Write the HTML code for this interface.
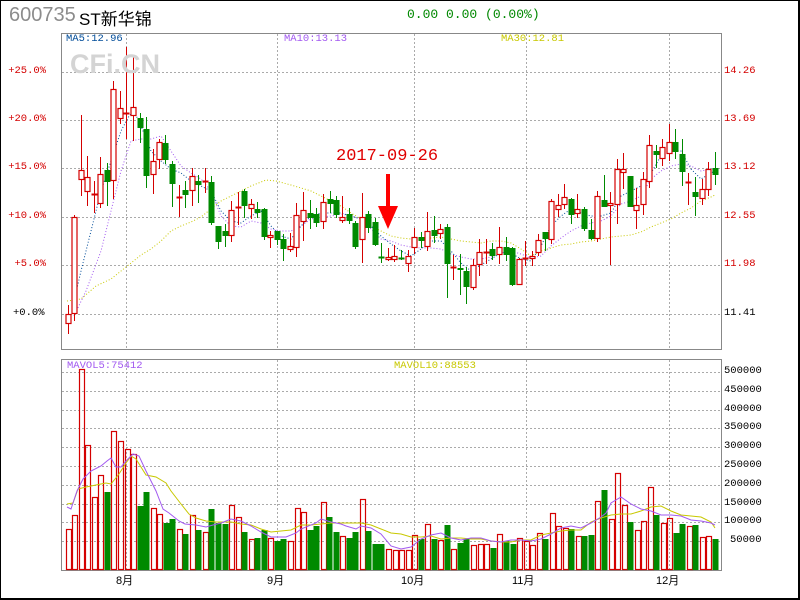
<!DOCTYPE html>
<html><head><meta charset="utf-8">
<style>
html,body{margin:0;padding:0;background:#fff;}
#w{position:relative;width:800px;height:600px;overflow:hidden;box-sizing:border-box;border:1px solid #000;border-right:2px solid #000;border-bottom:2px solid #000;}
.t{position:absolute;white-space:nowrap;font-family:"Liberation Mono",monospace;}
svg{position:absolute;left:0;top:0;}
</style></head><body>
<div id="w">
<svg id="s" width="800" height="600" xmlns="http://www.w3.org/2000/svg"></svg>
<div class="t" style="left:8px;top:3px;font-family:'Liberation Sans',sans-serif;font-size:20px;color:#8c8c8c;">600735</div>
<div class="t" style="left:78px;top:4px;font-family:'Liberation Sans','Noto Sans CJK SC',sans-serif;font-size:17px;color:#000;">ST新华锦</div>
<div class="t" style="left:406px;top:6px;font-size:13px;color:#008800;">0.00 0.00 (0.00%)</div>
<div class="t" style="left:65px;top:32px;font-size:10.5px;color:#004c99;">MA5:12.96</div>
<div class="t" style="left:283px;top:32px;font-size:10.5px;color:#a259f0;">MA10:13.13</div>
<div class="t" style="left:500px;top:32px;font-size:10.5px;color:#c8c800;">MA30:12.81</div>
<div class="t" style="left:69px;top:48px;font-family:'Liberation Sans',sans-serif;font-weight:bold;font-size:27px;color:#d4d4d4;">CFi.CN</div>
<div class="t" style="left:335px;top:146px;font-size:17px;color:#e00000;">2017-09-26</div>
<div class="t" style="left:66px;top:359px;font-size:10.5px;color:#a259f0;">MAVOL5:75412</div>
<div class="t" style="left:393px;top:359px;font-size:10.5px;color:#c8c800;">MAVOL10:88553</div>
<div id="lab"></div>
</div>
<script>
var s=document.getElementById('s');var h='';
function L(x1,y1,x2,y2,c,d,w){h+='<line x1="'+x1+'" y1="'+y1+'" x2="'+x2+'" y2="'+y2+'" stroke="'+c+'" stroke-width="'+(w||1)+'"'+(d?' stroke-dasharray="'+d+'"':'')+'/>';}
// frames
h+='<rect x="60.5" y="32.5" width="660" height="316" fill="none" stroke="#888"/>';
h+='<rect x="60.5" y="358.5" width="660" height="211" fill="none" stroke="#888"/>';
[71,119,167,216,264,313].forEach(function(y){L(61,y+.5,720,y+.5,'#aaa','2,2');});
for(var k=0;k<10;k++){var y=Math.round(371+18.8*k)+.5;L(61,y,720,y,'#aaa','2,2');}
[125,276,413,525,668].forEach(function(x){L(x+.5,33,x+.5,348,'#aaa','2,2');L(x+.5,359,x+.5,569,'#aaa','2,2');});
function P(pts,c,d){h+='<polyline fill="none" stroke="'+c+'" stroke-width="1"'+(d?' stroke-dasharray="'+d+'"':'')+' points="'+pts+'"/>';}
P('66,300 80,298 95,285 110,278 120,270 130,262 140,254 150,248 160,240 170,230 180,225 190,221 200,216 210,208 220,200 230,195 240,190 250,185 260,181 265,179 275,180 290,184 300,187 310,190 320,195 330,200 340,205 350,212 360,218 370,225 380,230 390,235 400,237 410,238 420,238 430,237 440,236 450,238 460,240 470,241 480,242 490,240 500,240 510,242 520,248 530,255 540,250 550,247 560,244 570,243 580,241 590,240 600,238 610,236 620,235 630,234 640,231 650,226 660,222 670,218 680,212 690,207 700,200 710,196 714,194','#c8c800','1,2');
P('73,315 85,290 100,250 110,210 120,170 130,140 140,138 150,138 160,135 170,150 180,165 190,172 200,178 210,190 220,215 230,225 240,226 250,220 260,222 270,228 280,230 290,230 300,225 310,218 320,216 330,215 340,213 350,215 360,218 370,228 380,238 390,240 400,244 410,246 420,247 430,247 440,248 450,253 460,256 470,258 480,258 490,256 500,252 510,250 520,253 530,257 540,255 550,245 560,237 570,230 580,225 590,222 600,220 610,215 620,203 630,200 640,195 650,178 660,170 670,165 680,163 690,165 700,170 710,168 714,168','#a259f0','1,2');
P('73,300 80,270 90,230 100,190 110,160 120,130 128,115 133,110 140,125 150,150 160,160 170,168 180,172 190,180 200,185 210,190 220,210 230,220 240,222 250,215 260,210 270,225 280,235 290,238 300,225 310,215 320,212 330,212 340,212 350,215 360,218 370,225 380,235 390,243 400,250 410,255 420,248 430,240 440,240 450,250 460,262 470,270 480,264 490,258 500,252 510,252 520,258 530,260 540,245 550,225 560,215 570,208 580,212 590,215 600,215 610,212 620,195 630,190 640,185 650,172 660,155 670,148 680,150 690,168 700,178 710,172 714,170','#004c99','1,2');
var C=[['r',66.7,304,333,313,322],['r',73,214,320,216,312],['r',80,114,195,169,178],['r',86,155,205,176,190],['r',93,180,212,193,193],['r',99,156,207,173,202],['g',106,162,205,169,181],['r',112,80,198,88,179],['r',119,90,123,107,117],['r',125,46,138,112,112],['r',132,54,140,106,114],['g',139,112,142,117,127],['g',145,116,187,128,175],['r',152,148,193,160,173],['r',158,138,168,141,158],['g',164,134,163,142,159],['g',171,160,206,163,183],['r',178,184,216,196,196],['g',184,180,207,189,194],['r',191,167,205,175,189],['g',197,174,202,180,184],['r',204,167,192,180,180],['g',210,175,224,181,222],['g',217,225,248,225,241],['g',224,223,246,230,235],['r',230,200,241,209,234],['r',237,191,224,206,206],['g',243,188,217,190,205],['r',250,198,218,203,207],['g',256,201,217,208,212],['g',263,207,239,208,236],['r',269,230,247,234,236],['g',276,230,244,230,239],['g',282,233,260,238,248],['r',289,232,251,245,248],['r',295,202,256,214,246],['r',302,191,240,209,220],['g',309,199,228,212,217],['g',315,207,226,213,222],['r',322,193,228,201,220],['g',329,190,212,198,203],['g',335,195,217,199,214],['r',341,195,222,216,219],['g',348,207,223,213,220],['g',354,220,248,222,246],['r',361,192,262,216,238],['g',367,210,232,213,227],['g',374,217,245,221,244],['g',380,242,262,256,256],['r',387,247,260,256,258],['r',393,244,261,255,258],['g',400,249,259,257,257],['r',407,249,271,255,262],['r',413,227,253,236,246],['g',420,231,247,236,240],['r',426,211,250,230,245],['g',433,215,242,229,235],['r',439,223,238,228,232],['g',446,223,297,226,263],['r',452,254,279,266,266],['g',459,253,294,267,269],['g',465,266,303,270,286],['r',472,258,289,264,286],['r',478,238,275,251,263],['r',485,238,263,251,251],['g',491,242,259,248,255],['r',498,226,263,246,253],['g',505,236,260,246,254],['g',511,246,285,247,284],['r',518,257,284,258,283],['r',524,240,265,257,257],['r',531,250,265,255,257],['r',537,233,255,239,251],['g',544,231,250,231,238],['r',550,198,243,200,238],['r',557,193,216,204,208],['r',563,183,208,196,203],['g',570,197,223,198,214],['r',576,193,217,208,212],['g',583,206,230,208,228],['g',590,218,239,229,238],['r',596,190,241,195,237],['g',603,174,206,199,206],['r',609,191,264,202,204],['r',616,158,223,168,203],['r',622,152,188,168,171],['g',629,175,206,175,206],['r',635,187,228,204,209],['r',642,171,214,178,203],['r',648,134,187,144,180],['g',655,144,167,150,154],['r',661,138,165,146,157],['r',668,123,160,141,152],['g',674,128,158,141,151],['g',681,138,185,153,171],['r',687,172,204,181,181],['g',694,176,215,191,196],['r',701,178,204,188,197],['r',707,161,195,168,188],['g',714,151,184,167,174]];
C.forEach(function(c){var x=Math.round(c[1]),col=c[0]=='r'?'#d40000':'#008a00';
 if(c[0]=='r'){L(x+.5,c[2],x+.5,c[4],col);L(x+.5,c[5],x+.5,c[3],col);}else L(x+.5,c[2],x+.5,c[3],col);
 if(c[5]-c[4]<2){L(x-2.5,c[4]+.5,x+3.5,c[4]+.5,col,0,2);}
 else if(c[0]=='r')h+='<rect x="'+(x-2)+'" y="'+(c[4]+.5)+'" width="5" height="'+(c[5]-c[4])+'" fill="#fff" stroke="'+col+'" stroke-width="1.2"/>';
 else h+='<rect x="'+(x-2.5)+'" y="'+c[4]+'" width="6" height="'+(c[5]-c[4])+'" fill="'+col+'"/>';});
// arrow
h+='<rect x="385" y="173" width="4" height="38" fill="#f00"/><polygon points="377,205 397,205 387,228" fill="#f00"/>';
var V=[['r',66.7,528],['r',73,514],['r',80,368],['r',86,444],['r',93,496],['r',99,474],['g',106,491],['r',112,430],['r',119,440],['r',126,448],['r',132,453],['g',139,505],['g',145,491],['r',152,507],['r',158,513],['g',165,522],['g',171,518],['r',178,528],['g',184,533],['r',191,514],['g',197,529],['r',204,531],['g',210,508],['g',217,522],['g',224,523],['r',230,504],['r',237,516],['g',243,531],['r',250,538],['g',256,537],['g',263,529],['r',269,537],['g',276,540],['g',282,538],['r',289,540],['r',296,507],['r',302,511],['g',309,529],['g',315,525],['r',322,501],['g',328,516],['g',335,531],['r',341,535],['g',348,537],['g',354,531],['r',361,498],['g',367,530],['g',374,543],['g',380,543],['r',387,548],['r',394,549],['r',400,549],['r',407,549],['r',413,534],['g',420,538],['r',426,523],['g',433,538],['r',439,539],['g',446,524],['r',452,548],['g',459,542],['g',465,538],['r',472,544],['r',479,543],['r',485,543],['g',492,547],['r',498,533],['g',505,540],['g',512,543],['r',518,537],['r',525,540],['r',531,544],['r',538,532],['g',544,538],['r',551,512],['r',557,525],['r',564,527],['g',570,528],['r',577,535],['g',583,535],['g',590,534],['r',596,500],['g',603,489],['r',610,518],['r',616,472],['r',623,504],['g',629,521],['r',636,529],['r',642,520],['r',649,486],['g',655,514],['r',662,522],['r',668,517],['g',675,532],['g',681,523],['r',688,525],['g',694,524],['r',701,536],['r',707,535],['g',714,538]];
V.forEach(function(v){var x=Math.round(v[1]);if(v[0]=='r')h+='<rect x="'+(x-2)+'.5" y="'+(v[2]+.5)+'" width="5" height="'+(568-v[2])+'" fill="none" stroke="#d40000" stroke-width="1.2"/>';else h+='<rect x="'+(x-2.5)+'" y="'+v[2]+'" width="6" height="'+(569-v[2])+'" fill="#008a00"/>';});
P('66,503 72,502 77,488 85,486 95,484 105,482 110,483 118,473 125,462 130,455 135,458 145,474 155,476 165,482 170,490 180,503 188,513 195,517 205,520 215,521 230,521 240,523 250,524 260,528 270,531 280,530 290,529 300,524 310,524 320,523 330,522 340,522 350,522 360,522 370,524 380,528 390,532 400,533 410,536 420,536 430,535 440,538 450,537 460,537 470,538 480,538 490,540 500,541 510,541 520,539 530,539 540,534 550,532 560,530 570,529 580,529 590,521 600,517 610,514 620,513 630,513 640,510 650,506 660,505 670,510 680,514 690,515 700,516 710,521 714,527','#c8c800');
P('66,506 70,508 76,490 82,478 90,470 100,465 106,460 110,457 115,466 120,466 125,460 132,453 138,455 145,470 155,490 162,508 168,512 178,520 184,523 195,524 205,526 212,524 220,522 230,518 240,520 250,525 260,531 270,536 285,536 295,532 300,528 315,522 320,518 330,521 340,523 345,525 355,528 360,525 370,527 380,533 390,545 400,548 410,546 420,538 430,534 440,532 450,537 460,539 470,537 480,537 490,540 500,541 510,539 520,539 530,540 540,538 550,533 560,527 570,525 580,527 590,522 600,516 605,512 610,502 620,496 630,503 640,508 650,510 660,514 670,514 680,515 690,519 700,520 710,522 714,524','#a259f0');
s.innerHTML=h;
var lb='';function T(x,y,t,c,fs,al){lb+='<div class="t" style="'+(al?'right:'+(800-x)+'px':'left:'+x+'px')+';top:'+y+'px;font-size:'+(fs||10.5)+'px;color:'+c+';">'+t+'</div>';}
[['+25.0%',71],['+20.0%',119],['+15.0%',167],['+10.0%',216],['+5.0%',264]].forEach(function(a){T(48,a[1]-7,a[0],'#d40000',10.5,1);});
T(12,306,'+0.0%','#000');
[['14.26',71],['13.69',119],['13.12',167],['12.55',216],['11.98',264]].forEach(function(a){T(723,a[1]-7,a[0],'#d40000');});
T(723,306,'11.41','#000');
var vl=['500000','450000','400000','350000','300000','250000','200000','150000','100000','50000'];
vl.forEach(function(t,k){T(723+(t.length==5?6:0),Math.round(371+18.8*k)-7,t,'#000',10.5);});
[['8月',115],['9月',266],['10月',400],['11月',511],['12月',655]].forEach(function(a){lb+='<div class="t" style="left:'+a[1]+'px;top:571px;font-family:\'Liberation Sans\',\'Noto Sans CJK SC\',sans-serif;font-size:11px;color:#000;">'+a[0]+'</div>';});
document.getElementById('lab').innerHTML=lb;
</script>
</body></html>
